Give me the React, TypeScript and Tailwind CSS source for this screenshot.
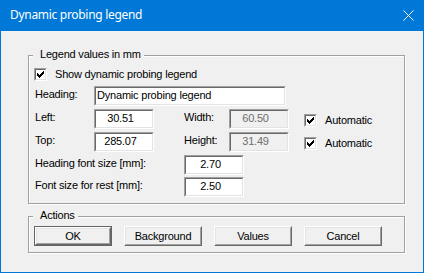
import React from "react";

const CHECK_PIXELS: [number, number, number][] = [
  [0, 6, 1],
  [1, 5, 2],
  [2, 0, 1],
  [2, 4, 3],
  [3, 0, 2],
  [3, 3, 3],
  [4, 0, 5],
  [5, 1, 3],
  [6, 2, 1],
];

function CheckBox({ label }: { label: string }) {
  return (
    <div className="flex items-start">
      <div className="w-[13px] h-[13px] border border-t-[#a0a0a0] border-l-[#a0a0a0] border-r-white border-b-white shrink-0">
        <div className="w-full h-full bg-white border border-t-[#696969] border-l-[#696969] border-r-[#e3e3e3] border-b-[#e3e3e3] flex items-start justify-start">
          <svg width="9" height="9" viewBox="0 0 9 9" shapeRendering="crispEdges">
            {CHECK_PIXELS.map(([r, x, w], i) => (
              <rect key={i} x={x + 1} y={r + 1} width={w} height={1} fill="#000" />
            ))}
          </svg>
        </div>
      </div>
      <span className="ml-[8px] whitespace-nowrap">{label}</span>
    </div>
  );
}

function Edit({
  value,
  w,
  disabled,
  left,
}: {
  value: string;
  w: string;
  disabled?: boolean;
  left?: boolean;
}) {
  return (
    <div
      className={`${w} h-[20px] shrink-0 border border-t-[#a0a0a0] border-l-[#a0a0a0] border-r-white border-b-white`}
    >
      <div
        className={`w-full h-full border border-t-[#696969] border-l-[#696969] border-r-[#e3e3e3] border-b-[#e3e3e3] pt-[1px] whitespace-nowrap overflow-hidden ${
          disabled ? "bg-[#f0f0f0] text-[#6d6d6d]" : "bg-white text-black"
        } ${left ? "pl-[1px] text-left" : "text-center pr-[7px]"}`}
      >
        {value}
      </div>
    </div>
  );
}

function Button({ label, isDefault }: { label: string; isDefault?: boolean }) {
  const inner = (
    <div className="w-full h-full border border-t-white border-l-white border-r-[#696969] border-b-[#696969]">
      <div className="w-full h-full border border-t-[#e3e3e3] border-l-[#e3e3e3] border-r-[#a0a0a0] border-b-[#a0a0a0] bg-[#f0f0f0] flex items-center justify-center">
        {label}
      </div>
    </div>
  );
  return (
    <div className="w-[78px] h-[20px] shrink-0">
      {isDefault ? (
        <div className="w-full h-full border border-[#646464]">{inner}</div>
      ) : (
        inner
      )}
    </div>
  );
}

function Label({ text, w }: { text: string; w: string }) {
  return <div className={`${w} shrink-0 pt-[2px] whitespace-nowrap`}>{text}</div>;
}

export default function App() {
  return (
    <div className="w-[424px] h-[273px] bg-[#f0f0f0] flex flex-col border-x border-b border-[#0078d7] font-['Liberation_Sans',Arial,sans-serif] text-[11px] tracking-[-0.2px] leading-[13px] text-black overflow-hidden">
      <div className="h-[31px] shrink-0 bg-[#0078d7] flex items-center justify-between pl-[9px] pr-[9px]">
        <span className="font-['Noto_Sans',sans-serif] text-[12px] tracking-[-0.3px] text-white leading-[16px] -mt-[1px]">
          Dynamic probing legend
        </span>
        <svg width="11" height="11" viewBox="0 0 11 11">
          <path d="M0.5 0.5 L10.5 10.5 M10.5 0.5 L0.5 10.5" stroke="#fff" strokeWidth="1" />
        </svg>
      </div>

      <div className="flex flex-col pl-[27px] pt-[24px]">
        <div className="relative w-[377px] h-[149px] border border-[#a0a0a0] shadow-[1px_1px_0_#fff,inset_1px_1px_0_#fff] pl-[5px] pt-[12px] flex flex-col">
          <span className="absolute left-[4px] top-[-8px] pl-[7px] pr-[3px] bg-[#f0f0f0] whitespace-nowrap">
            Legend values in mm
          </span>

          <CheckBox label="Show dynamic probing legend" />

          <div className="flex items-start mt-[5px]">
            <Label text="Heading:" w="w-[60px] pl-[1px]" />
            <Edit value="Dynamic probing legend" w="w-[192px]" left />
          </div>

          <div className="flex items-start mt-[3px]">
            <Label text="Left:" w="w-[60px] pl-[1px]" />
            <Edit value="30.51" w="w-[60px]" />
            <Label text="Width:" w="w-[45px] ml-[30px]" />
            <Edit value="60.50" w="w-[60px]" disabled />
            <div className="ml-[15px] mt-[5px]">
              <CheckBox label="Automatic" />
            </div>
          </div>

          <div className="flex items-start mt-[3px]">
            <Label text="Top:" w="w-[60px] pl-[1px]" />
            <Edit value="285.07" w="w-[60px]" />
            <Label text="Height:" w="w-[45px] ml-[30px]" />
            <Edit value="31.49" w="w-[60px]" disabled />
            <div className="ml-[15px] mt-[5px]">
              <CheckBox label="Automatic" />
            </div>
          </div>

          <div className="flex items-start mt-[3px]">
            <Label text="Heading font size [mm]:" w="w-[150px] pl-[1px]" />
            <Edit value="2.70" w="w-[60px]" />
          </div>

          <div className="flex items-start mt-[2px]">
            <Label text="Font size for rest [mm]:" w="w-[150px] pl-[1px]" />
            <Edit value="2.50" w="w-[60px]" />
          </div>
        </div>

        <div className="relative mt-[12px] w-[377px] h-[37px] border border-[#a0a0a0] shadow-[1px_1px_0_#fff,inset_1px_1px_0_#fff] pl-[5px] pt-[9px] flex gap-[12px]">
          <span className="absolute left-[4px] top-[-8px] pl-[7px] pr-[3px] bg-[#f0f0f0] whitespace-nowrap">
            Actions
          </span>
          <Button label="OK" isDefault />
          <Button label="Background" />
          <Button label="Values" />
          <Button label="Cancel" />
        </div>
      </div>
    </div>
  );
}
